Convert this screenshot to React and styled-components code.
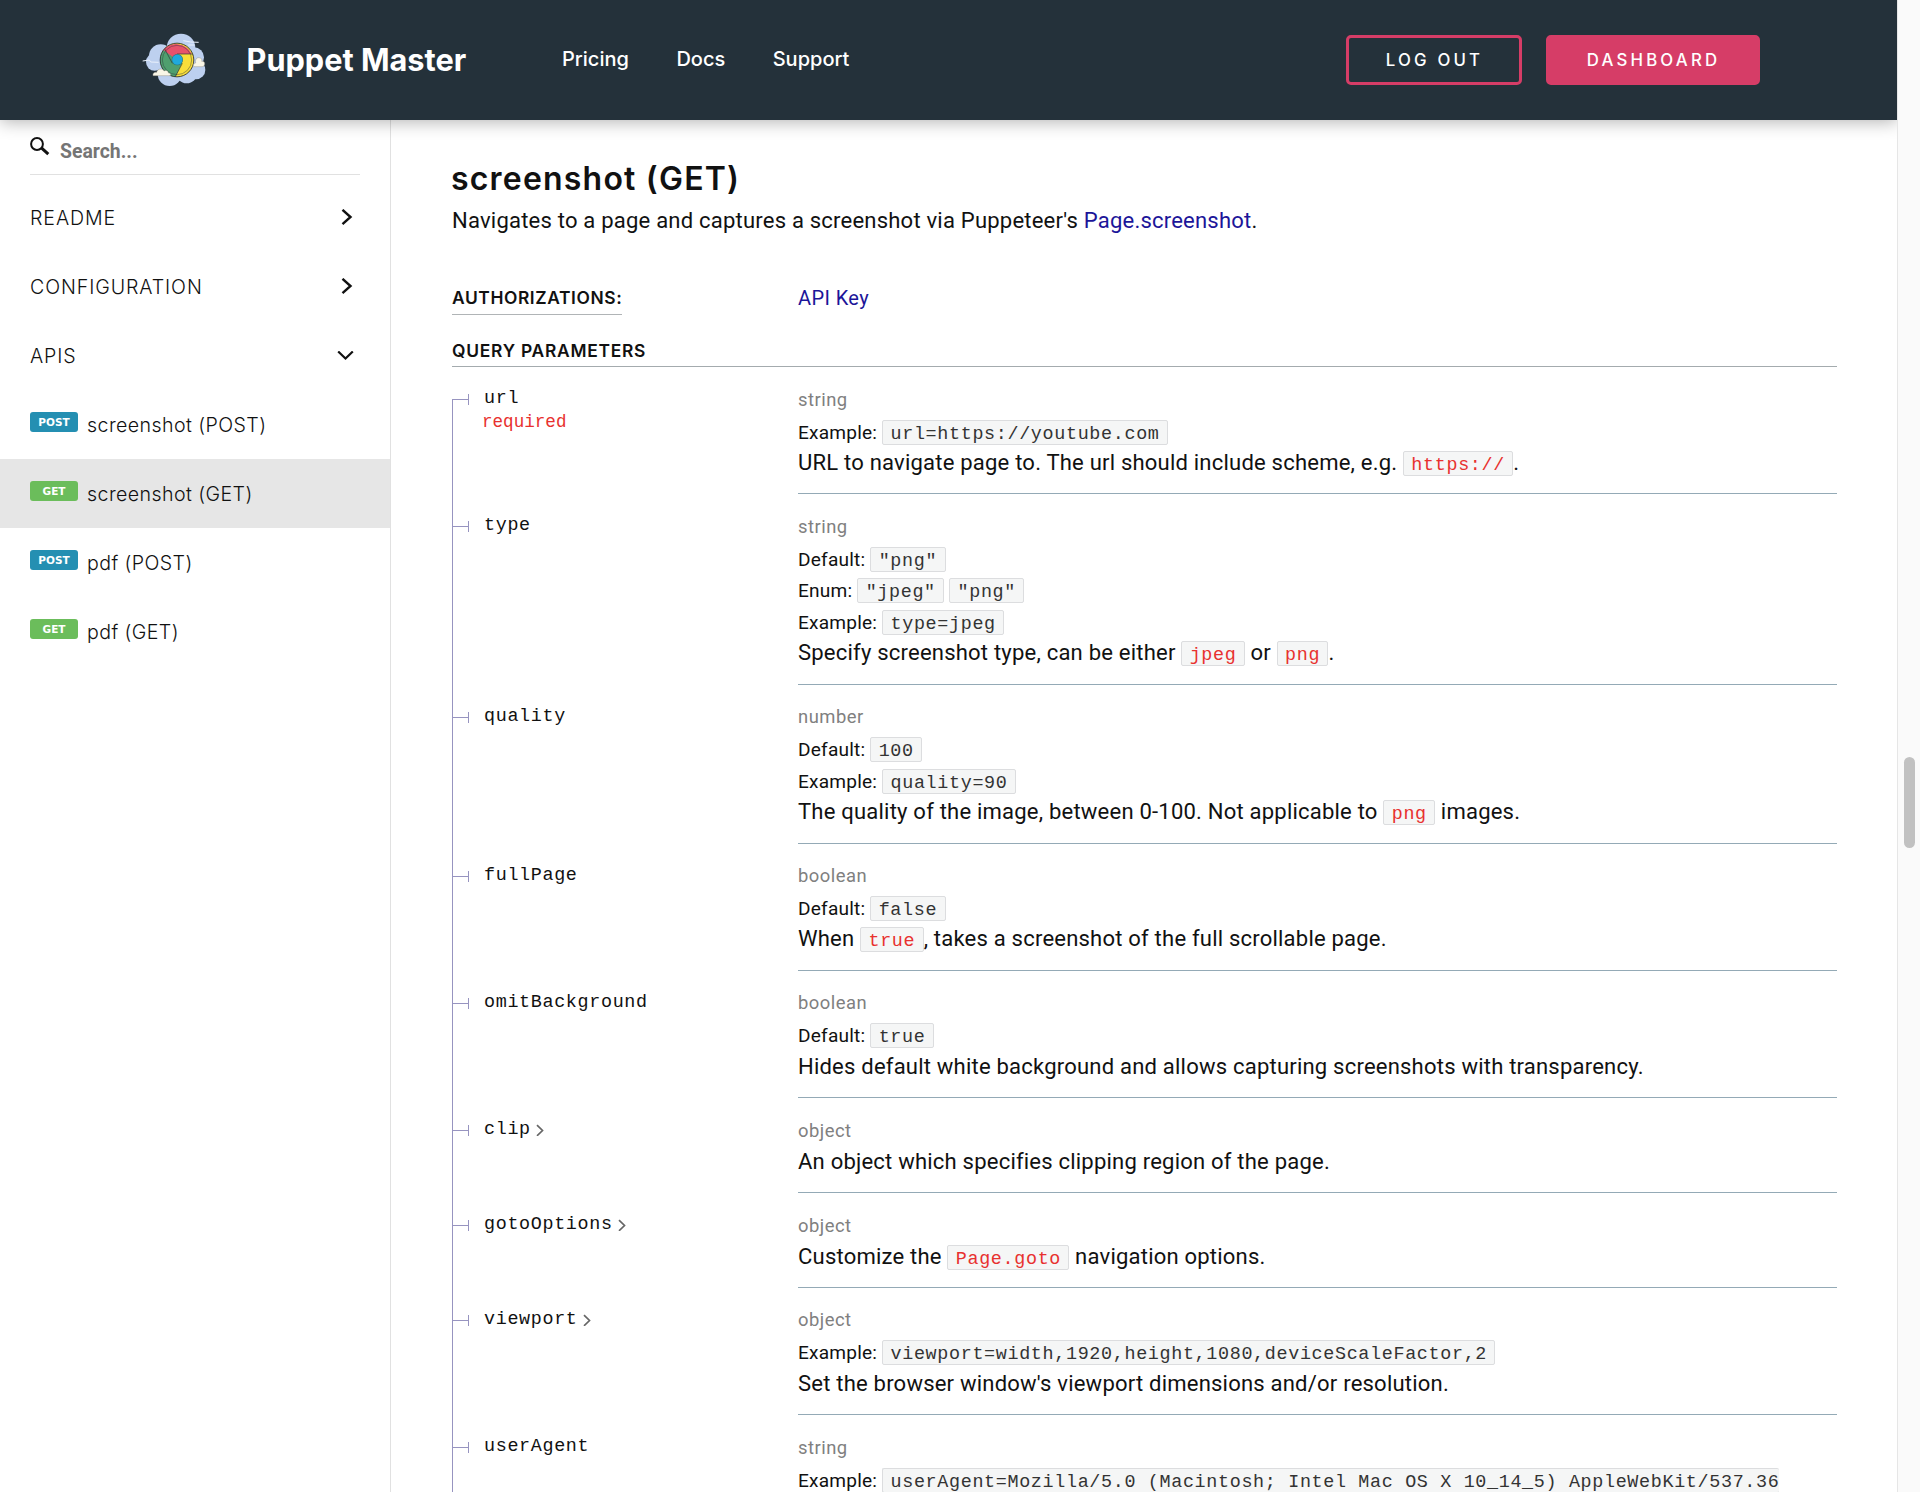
import React from "react";
import styled, { createGlobalStyle, css } from "styled-components";

const sans = `Roboto, "Liberation Sans", sans-serif`;
const display = `Inter, "Liberation Sans", sans-serif`;
const mono = `"Liberation Mono", monospace`;

const GlobalStyle = createGlobalStyle`
  *, *::before, *::after { box-sizing: border-box; }
  body { margin: 0; background: #fff; color: #111; font-family: ${sans}; }
  a { text-decoration: none; color: inherit; }
`;

/* ---------- frame ---------- */

const Frame = styled.div`
  display: flex;
  width: 1920px;
  height: 1492px;
  overflow: hidden;
`;

const Page = styled.div`
  display: flex;
  flex-direction: column;
  width: 1897px;
  height: 100%;
`;

const Columns = styled.div`
  display: flex;
  flex: 1;
  min-height: 0;
`;

const ScrollTrack = styled.div`
  position: relative;
  z-index: 2;
  flex: 1;
  padding: 757px 5px 0 6px;
  background: #fafafa;
  border-left: 1px solid #e6e6e6;
`;

const ScrollThumb = styled.div`
  height: 91px;
  border-radius: 6px;
  background: #c1c1c1;
`;

/* ---------- header ---------- */

const Header = styled.header`
  position: relative;
  z-index: 1;
  display: flex;
  align-items: center;
  flex: none;
  height: 120px;
  padding: 0 137px 0 142px;
  background: #24313a;
  color: #fff;
  font-family: ${display};
  box-shadow: 0 2px 16px rgba(0, 0, 0, 0.3);
`;

const Brand = styled.a`
  display: flex;
  align-items: center;
  gap: 40.5px;
  width: 420px;
  font-size: 30.7px;
  font-weight: 700;
  letter-spacing: 0;
  white-space: nowrap;
`;

const BrandName = styled.span`
  padding-bottom: 2px;
`;

const Nav = styled.nav`
  display: flex;
  gap: 47.5px;
  flex: 1;
  padding-bottom: 3px;
  font-size: 20px;
  font-weight: 500;
`;

const Actions = styled.div`
  display: flex;
  gap: 24px;
`;

const Button = styled.a`
  display: flex;
  align-items: center;
  justify-content: center;
  width: ${(p) => p.$width}px;
  height: 50px;
  padding: 0 0 1px 1px;
  border: 3px solid #d63d67;
  border-radius: 5px;
  background: ${(p) => (p.$filled ? "#d63d67" : "transparent")};
  font-size: 16.8px;
  font-weight: 500;
  letter-spacing: 3.2px;
`;

/* ---------- sidebar ---------- */

const Sidebar = styled.aside`
  flex: none;
  width: 391px;
  border-right: 1px solid #e1e1e1;
`;

const Search = styled.label`
  display: flex;
  align-items: flex-start;
  gap: 10px;
  height: 55px;
  margin: 0 30px 8px;
  padding-top: 17px;
  border-bottom: 1px solid #e1e1e1;
`;

const SearchText = styled.span`
  padding-top: 4px;
  color: #757575;
  font-size: 19.4px;
  font-weight: 700;
  line-height: 22px;
`;

const MenuItem = styled.a`
  display: flex;
  align-items: center;
  height: 69px;
  padding: 0 36px 0 30px;
  background: ${(p) => (p.$active ? "#e6e6e6" : "transparent")};
  font-family: ${display};
  font-size: 19.6px;
  font-weight: 300;
  letter-spacing: ${(p) => (p.$group ? "0.9px" : "0.42px")};
`;

const MenuLabel = styled.span`
  flex: 1;
`;

const Badge = styled.span`
  display: flex;
  align-items: center;
  justify-content: center;
  width: 48px;
  height: 20px;
  margin: 0 9px 5px 0;
  border-radius: 3px;
  background: ${(p) => (p.$method === "GET" ? "#6bbd5b" : "#248fb2")};
  color: #fff;
  font: 700 10.5px "DejaVu Sans", sans-serif;
  letter-spacing: 0;
`;

/* ---------- content ---------- */

const Content = styled.main`
  flex: 1;
  min-width: 0;
  padding: 39px 60px 0 61px;
`;

const Title = styled.h2`
  margin: 0 0 7px -1px;
  font: 600 32px/40px ${display};
  letter-spacing: 1.2px;
`;

const Lead = styled.p`
  margin: 0 0 50px;
  font-size: 22.05px;
  line-height: 30px;
  letter-spacing: 0.2px;
`;

const Link = styled.a`
  color: #1c1599;
`;

const AuthRow = styled.div`
  display: grid;
  grid-template-columns: 346px 1fr;
  align-items: start;
  margin-bottom: 24px;
`;

const headingText = css`
  margin: 0;
  font: 600 17.4px/24px ${display};
  letter-spacing: 0.75px;
`;

const AuthHeading = styled.h5`
  ${headingText}
  letter-spacing: 0.6px;
  justify-self: start;
  padding-bottom: 4px;
  border-bottom: 1px solid #b0b4b6;
`;

const SectionHeading = styled.h5`
  ${headingText}
  padding-bottom: 3px;
  border-bottom: 1px solid #a4abae;
`;

const AuthLink = styled(Link)`
  font-size: 20px;
  line-height: 24px;
  letter-spacing: 0.4px;
`;

const Param = styled.div`
  display: grid;
  grid-template-columns: 17px 329px 1fr;
`;

const Branch = styled.div`
  display: flex;
  flex-direction: column;
`;

const Stem = styled.div`
  flex: ${(p) => (p.$height ? "none" : 1)};
  height: ${(p) => (p.$height ? `${p.$height}px` : "auto")};
  border-left: 1px solid ${(p) => (p.$hidden ? "transparent" : "#9794c0")};
`;

const Tick = styled.div`
  display: flex;
  flex-direction: column;
  height: 11px;
  border-right: 1px solid #9794c0;
`;

const TickLine = styled.div`
  height: 1px;
  background: #9794c0;
`;

const ParamName = styled.div`
  padding: 22px 0 0 15px;
  font: 18.4px/20px ${mono};
  letter-spacing: 0.66px;
`;

const NameLine = styled.div`
  display: flex;
  align-items: center;
  gap: 5.5px;
`;

const Required = styled.div`
  margin: 3px 0 0 -2px;
  color: #e8312f;
  font-size: 17.6px;
  letter-spacing: 0;
`;

const Details = styled.div`
  padding: 20.5px 0 ${(p) => (p.$meta ? 17.5 : 16.9)}px;
  border-bottom: 1px solid #94aab6;
`;

const Type = styled.div`
  margin-bottom: 5px;
  color: #808080;
  font-size: 18.4px;
  line-height: 24px;
  letter-spacing: 0.5px;
`;

const Meta = styled.div`
  font-size: 19.1px;
  line-height: 31.7px;
  letter-spacing: 0.2px;
  white-space: nowrap;
`;

const Desc = styled.p`
  margin: 0;
  padding-top: 0.5px;
  font-size: 22.05px;
  line-height: 27px;
  letter-spacing: 0.2px;
`;

const Code = styled.code`
  display: inline-block;
  padding: 4px 7.4px 0;
  border: 1px solid #dcdddf;
  border-radius: 2px;
  background: #f5f6f6;
  color: ${(p) => (p.$red ? "#e8312f" : "#333")};
  font: 18.4px/19px ${mono};
  letter-spacing: 0.66px;
  ${(p) => p.$open && css`
    padding-right: 0;
    border-right: 0;
  `}
`;

/* ---------- drawings ---------- */

const Logo = () => (
  <svg width="64" height="54" viewBox="66 69 192 162">
    <g fill="#bdd0ef">
      <circle cx="183" cy="114" r="43" />
      <circle cx="122" cy="138" r="35" />
      <circle cx="104" cy="156" r="26" />
      <circle cx="222" cy="142" r="30" />
      <circle cx="228" cy="180" r="28" />
      <circle cx="200" cy="188" r="32" />
      <circle cx="149" cy="192" r="36" />
    </g>
    <path d="M68 153l20-3 4 6 24 1M190 92l22 4 24 1M205 105h18" stroke="#eaf1fc" strokeWidth="3" fill="none" />
    <circle cx="171" cy="150" r="51" fill="#f8de3a" />
    <path d="M171 150L127 124A51 51 0 0 1 215 132H171z" fill="#e8526b" />
    <path d="M171 150L130 120A51 51 0 0 0 166 201L187 159z" fill="#4f9f6e" />
    <path d="M171 132H217A50 50 0 0 1 168 200L187 159z" fill="#f8de3a" />
    <g fill="none" stroke="#2b3038" strokeWidth="2.6">
      <circle cx="171" cy="150" r="50.5" />
      <circle cx="171" cy="150" r="44" strokeWidth="1.3" />
      <path d="M171 132H218M135 118L157 160M187 160L166 200" strokeWidth="2" />
    </g>
    <circle cx="172" cy="149" r="17" fill="#2b6f6f" />
    <circle cx="172" cy="149" r="15.5" fill="#20a9dc" />
    <g fill="#f9f6e6" stroke="#8a877c" strokeWidth="1.2">
      <path d="M99 197c-2-8 5-12 11-10 1-10 17-14 22-4 6-4 14 0 13 6 5-1 9 4 6 8z" />
      <path d="M222 170c-4-5 0-11 5-11-2-9 2-17 10-16 8 0 10 7 8 11 6-1 10 3 9 8 0 5-3 8-8 8z" />
    </g>
  </svg>
);

const SearchIcon = () => (
  <svg width="20" height="20" viewBox="0 0 20 20" fill="none" stroke="#111">
    <circle cx="7" cy="7" r="5.9" strokeWidth="2" />
    <path d="M11.4 10.9L18.3 17.2" strokeWidth="3" />
  </svg>
);

const GroupChevron = ({ open }) =>
  open ? (
    <svg width="17" height="10" viewBox="0 0 17 10" fill="none" stroke="#111" strokeWidth="2.2">
      <path d="M1.2 0.5L8.5 7.5L15.8 0.5" />
    </svg>
  ) : (
    <svg width="13" height="17" viewBox="0 0 13 17" fill="none" stroke="#111" strokeWidth="2.4">
      <path d="M1.5 0.8L9.5 8L1.5 15.2" />
    </svg>
  );

const NameChevron = () => (
  <svg width="8" height="12" viewBox="0 0 8 12" fill="none" stroke="#666" strokeWidth="1.7">
    <path d="M1 1.2L6.5 6.5L1 11.8" />
  </svg>
);

/* ---------- data ---------- */

const groups = [
  { label: "README" },
  { label: "CONFIGURATION" },
  { label: "APIS", open: true },
];

const endpoints = [
  { method: "POST", label: "screenshot (POST)" },
  { method: "GET", label: "screenshot (GET)", active: true },
  { method: "POST", label: "pdf (POST)" },
  { method: "GET", label: "pdf (GET)" },
];

const Red = ({ children }) => <Code $red>{children}</Code>;

const params = [
  {
    name: "url",
    required: true,
    type: "string",
    meta: [["Example", "url=https://youtube.com"]],
    desc: <>URL to navigate page to. The url should include scheme, e.g. <Red>https://</Red>.</>,
  },
  {
    name: "type",
    type: "string",
    meta: [["Default", '"png"'], ["Enum", '"jpeg"', '"png"'], ["Example", "type=jpeg"]],
    desc: <>Specify screenshot type, can be either <Red>jpeg</Red> or <Red>png</Red>.</>,
  },
  {
    name: "quality",
    type: "number",
    meta: [["Default", "100"], ["Example", "quality=90"]],
    desc: <>The quality of the image, between 0-100. Not applicable to <Red>png</Red> images.</>,
  },
  {
    name: "fullPage",
    type: "boolean",
    meta: [["Default", "false"]],
    desc: <>When <Red>true</Red>, takes a screenshot of the full scrollable page.</>,
  },
  {
    name: "omitBackground",
    type: "boolean",
    meta: [["Default", "true"]],
    desc: "Hides default white background and allows capturing screenshots with transparency.",
  },
  {
    name: "clip",
    expandable: true,
    type: "object",
    meta: [],
    desc: "An object which specifies clipping region of the page.",
  },
  {
    name: "gotoOptions",
    expandable: true,
    type: "object",
    meta: [],
    desc: <>Customize the <Red>Page.goto</Red> navigation options.</>,
  },
  {
    name: "viewport",
    expandable: true,
    type: "object",
    meta: [["Example", "viewport=width,1920,height,1080,deviceScaleFactor,2"]],
    desc: "Set the browser window's viewport dimensions and/or resolution.",
  },
  {
    name: "userAgent",
    type: "string",
    openChip: true,
    meta: [["Example", "userAgent=Mozilla/5.0 (Macintosh; Intel Mac OS X 10_14_5) AppleWebKit/537.36"]],
  },
];

const ParamRow = ({ param, first }) => (
  <Param>
    <Branch>
      <Stem $height={27} $hidden={first} />
      <Tick>
        <Stem $height={5} $hidden={first} />
        <TickLine />
        <Stem />
      </Tick>
      <Stem />
    </Branch>
    <ParamName>
      <NameLine>
        {param.name}
        {param.expandable && <NameChevron />}
      </NameLine>
      {param.required && <Required>required</Required>}
    </ParamName>
    <Details $meta={param.meta.length > 0}>
      <Type>{param.type}</Type>
      {param.meta.map(([label, ...values]) => (
        <Meta key={label}>
          {label}:
          {values.map((v) => (
            <React.Fragment key={v}>
              {" "}
              <Code $open={param.openChip}>{v}</Code>
            </React.Fragment>
          ))}
        </Meta>
      ))}
      {param.desc && <Desc>{param.desc}</Desc>}
    </Details>
  </Param>
);

export default function App() {
  return (
    <>
      <GlobalStyle />
      <Frame>
        <Page>
          <Header>
            <Brand>
              <Logo />
              <BrandName>Puppet Master</BrandName>
            </Brand>
            <Nav>
              <a>Pricing</a>
              <a>Docs</a>
              <a>Support</a>
            </Nav>
            <Actions>
              <Button $width={176}>LOG OUT</Button>
              <Button $width={214} $filled>DASHBOARD</Button>
            </Actions>
          </Header>
          <Columns>
            <Sidebar>
              <Search>
                <SearchIcon />
                <SearchText>Search...</SearchText>
              </Search>
              {groups.map((g) => (
                <MenuItem key={g.label} $group>
                  <MenuLabel>{g.label}</MenuLabel>
                  <GroupChevron open={g.open} />
                </MenuItem>
              ))}
              {endpoints.map((e) => (
                <MenuItem key={e.label} $active={e.active}>
                  <Badge $method={e.method}>{e.method}</Badge>
                  <MenuLabel>{e.label}</MenuLabel>
                </MenuItem>
              ))}
            </Sidebar>
            <Content>
              <Title>screenshot (GET)</Title>
              <Lead>
                Navigates to a page and captures a screenshot via Puppeteer's <Link>Page.screenshot</Link>.
              </Lead>
              <AuthRow>
                <AuthHeading>AUTHORIZATIONS:</AuthHeading>
                <AuthLink>API Key</AuthLink>
              </AuthRow>
              <SectionHeading>QUERY PARAMETERS</SectionHeading>
              {params.map((p, i) => (
                <ParamRow key={p.name} param={p} first={i === 0} />
              ))}
            </Content>
          </Columns>
        </Page>
        <ScrollTrack>
          <ScrollThumb />
        </ScrollTrack>
      </Frame>
    </>
  );
}
